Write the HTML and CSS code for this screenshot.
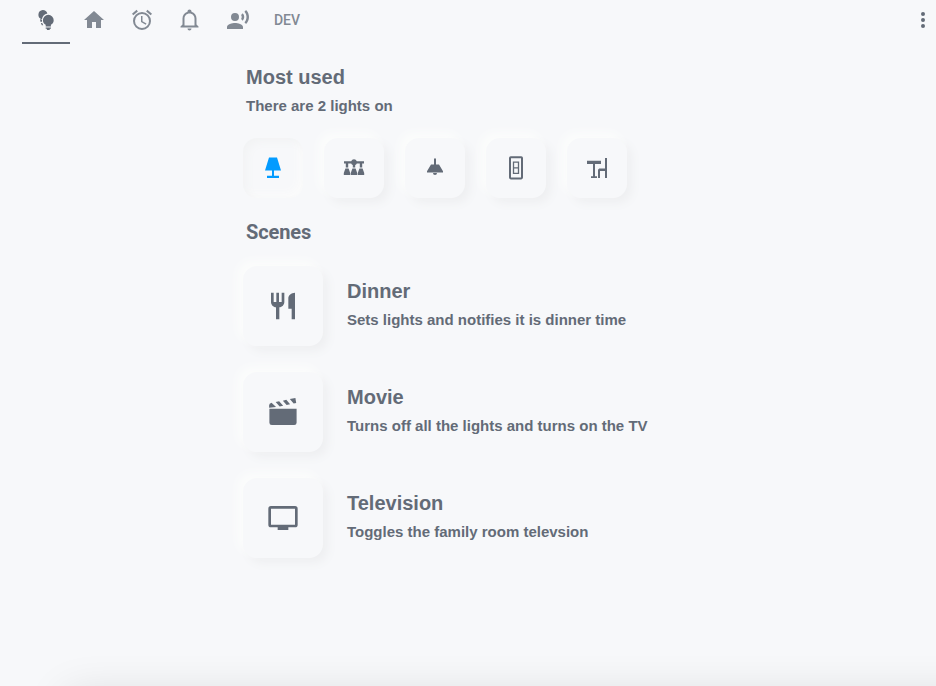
FILE: index.html
```html
<!DOCTYPE html>
<html lang="en">
<head>
<meta charset="utf-8">
<title>Home</title>
<link rel="stylesheet" href="styles.css">
</head>
<body>
<header class="toolbar">
  <nav class="tabs">
    <a class="tab active"><svg viewBox="0 0 24 24"><path d="M8.8 2A4.9 4.9 0 0 1 13.4 5.5A7 7 0 0 0 7.9 11.4A4.8 4.8 0 0 1 8.8 2ZM6.1 11L8 12V13.8H6.4ZM6.9 15H8.2L9.2 17.2H7.8Z"/><path d="M14.3 6.8A5.4 5.4 0 0 1 19.7 12.2C19.7 14.2 18.6 15.7 16.9 16.8V18.6H11.7V16.8C10 15.7 8.9 14.2 8.9 12.2A5.4 5.4 0 0 1 14.3 6.8ZM11.7 19.6H16.9V20.8H11.7ZM12.9 20.8H15.7V22H12.9Z"/></svg></a>
    <a class="tab"><svg viewBox="0 0 24 24"><path d="M10,20V14H14V20H19V12H22L12,3L2,12H5V20H10Z"/></svg></a>
    <a class="tab"><svg viewBox="0 0 24 24"><path d="M12,20A7,7 0 0,1 5,13A7,7 0 0,1 12,6A7,7 0 0,1 19,13A7,7 0 0,1 12,20M12,4A9,9 0 0,0 3,13A9,9 0 0,0 12,22A9,9 0 0,0 21,13A9,9 0 0,0 12,4M12.5,8H11V14L15.75,16.85L16.5,15.62L12.5,13.25V8M7.88,3.39L6.6,1.86L2,5.71L3.29,7.24L7.88,3.39M22,5.72L17.4,1.86L16.11,3.39L20.71,7.25L22,5.72Z"/></svg></a>
    <a class="tab"><svg viewBox="0.5 0.5 24 24"><path d="M10 21H14C14 22.1 13.1 23 12 23S10 22.1 10 21M21 19V20H3V19L5 17V11C5 7.9 7.03 5.17 10 4.29V4C10 2.9 10.9 2 12 2S14 2.9 14 4V4.29C16.97 5.17 19 7.9 19 11V17L21 19M17 11C17 8.24 14.76 6 12 6S7 8.24 7 11V18H17V11Z"/></svg></a>
    <a class="tab"><svg viewBox="0 0 24 24"><path d="M9,5A4,4 0 0,1 13,9A4,4 0 0,1 9,13A4,4 0 0,1 5,9A4,4 0 0,1 9,5M9,15C11.67,15 17,16.34 17,19V21H1V19C1,16.34 6.33,15 9,15M16.76,5.36C18.78,7.56 18.78,10.61 16.76,12.63L15.08,10.94C15.92,9.76 15.92,8.23 15.08,7.05L16.76,5.36M20.07,2C24,6.05 23.97,12.11 20.07,16L18.44,14.37C21.21,11.19 21.21,6.65 18.44,3.63L20.07,2Z"/></svg></a>
    <a class="tab dev">DEV</a>
  </nav>
  <svg class="menu" viewBox="0 0 24 24"><path d="M12,16A2,2 0 1,1 12,20A2,2 0 1,1 12,16M12,10A2,2 0 1,1 12,14A2,2 0 1,1 12,10M12,4A2,2 0 1,1 12,8A2,2 0 1,1 12,4Z"/></svg>
</header>
<main class="content">
  <h1>Most used</h1>
  <p>There are 2 lights on</p>
  <div class="lights">
    <div class="tile on"><svg viewBox="0 0.5 24 24"><path d="M8,2H16L20,15H4L8,2M11,15H13V20.3H18V22.5H6V20.3H11V15Z"/></svg></div>
    <div class="tile"><svg viewBox="0 0 24 24"><path d="M2 5.2H9.2A3 3 0 0 1 14.8 5.2H22V7.4H20.2V11.5H17.8V7.4H14.8A3 3 0 0 1 13.2 9V11.5H10.8V9A3 3 0 0 1 9.2 7.4H6.2V11.5H3.8V7.4H2ZM3.4 12.5H6.6L8.2 17V19H1.8V17ZM10.4 12.5H13.6L15.2 17V19H8.8V17ZM17.4 12.5H20.6L22.2 17V19H15.8V17Z"/></svg></div>
    <div class="tile"><svg viewBox="0 0 24 24"><path d="M8,8.5H11V2.5H13V8.5H16L20,15.2V16.4H4V15.2L8,8.5M14,17A2,2 0 0,1 10,17H14Z"/></svg></div>
    <div class="tile"><svg class="line" viewBox="0 0 24 24"><rect x="6" y="1.2" width="12" height="21.2" rx=".8"/><path class="thin" d="M9.5 6.2H14.5V17.4H9.5ZM9.5 11.8H14.5"/></svg></div>
    <div class="tile"><svg viewBox="0 0 24 24"><path d="M2 4.8H16V8H10V20.2H12V22H6V20.2H8V8H2ZM20 2H22V22H20V15H15V22H13V13.8L14.2 12.5H20Z"/></svg></div>
  </div>
  <h2>Scenes</h2>
  <section class="scene">
    <div class="tile big"><svg viewBox="0 0 24 24"><path d="M11,9H9V2H7V9H5V2H3V9C3,11.12 4.66,12.84 6.75,12.97V22H9.25V12.97C11.34,12.84 13,11.12 13,9V2H11V9M16,6V14H18.5V22H21V2C18.24,2 16,4.24 16,6Z"/></svg></div>
    <div><h3>Dinner</h3><p>Sets lights and notifies it is dinner time</p></div>
  </section>
  <section class="scene">
    <div class="tile big"><svg viewBox="0 0 24 24"><path d="M1.8 9.5H22.2V20A1.8 1.8 0 0 1 20.4 21.8H3.6A1.8 1.8 0 0 1 1.8 20ZM1.6 8.8V7Q1.6 5.6 3.4 5L6.8 8.3ZM6.5 4.5L9.1 3.9L12.1 7.3L9.5 7.9ZM11.9 3.5L14.5 2.9L17.3 6.2L14.7 6.8ZM17.1 2.3L21.3 1.5L21.9 5.3L20 5.6Z"/></svg></div>
    <div><h3>Movie</h3><p>Turns off all the lights and turns on the TV</p></div>
  </section>
  <section class="scene">
    <div class="tile big"><svg viewBox="0 0 24 24"><path d="M21,17H3V5H21M21,3H3A2,2 0 0,0 1,5V17A2,2 0 0,0 3,19H8V21H16V19H21A2,2 0 0,0 23,17V5A2,2 0 0,0 21,3Z"/></svg></div>
    <div><h3>Television</h3><p>Toggles the family room televsion</p></div>
  </section>
</main>
<div class="edge"></div>
</body>
</html>
```
FILE: styles.css
```css
* { box-sizing: border-box; }
body {
  margin: 0;
  height: 686px;
  overflow: hidden;
  background: #f7f8fa;
  color: #636b77;
  font-family: "Liberation Sans", Arial, sans-serif;
}
svg { display: block; width: 24px; height: 24px; fill: currentColor; flex: none; }
.toolbar { display: flex; justify-content: space-between; height: 44px; padding-left: 22px; overflow: hidden; }
.tabs { display: flex; }
.tab { display: flex; justify-content: center; width: 48px; padding-top: 8px; color: #828993; }
.tab.active { color: #636b77; border-bottom: 2px solid #636b77; }
.dev { width: 50px; font: 500 14px/24px Roboto, sans-serif; }
.menu { margin: 8px 1px 0 0; }
.content { padding-left: 246px; }
h1, h2, h3, p { margin: 0; font-weight: bold; }
h1, h2, h3 { font-size: 20px; line-height: 24px; }
h1 { padding-top: 21px; }
h2 { font-family: Roboto, sans-serif; font-weight: 700; letter-spacing: -.1px; margin-top: 22px; }
p { font-size: 15px; line-height: 20px; margin-top: 7px; }
.lights { display: flex; gap: 21px; margin: 22px 0 0 -3px; }
.tile {
  display: flex;
  align-items: center;
  justify-content: center;
  flex: none;
  width: 60px;
  height: 60px;
  border-radius: 14px;
  background: #f7f8fa;
  box-shadow: -5px -5px 10px #fcfdfc, 5px 5px 10px #eeeff1;
}
.tile.on { color: #039bff; box-shadow: inset 4px 4px 8px #f2f3f4, inset -4px -4px 8px #fbfbfb; }
.tile.big { width: 80px; height: 80px; }
.big svg { width: 32px; height: 32px; }
.line { fill: none; stroke: currentColor; stroke-width: 2; }
.thin { stroke-width: 1.3; }
.scene { display: flex; gap: 24px; margin: 22px 0 26px -3px; }
.scene + .scene { margin-top: 0; }
.scene h3 { margin-top: 13px; }
.edge { position: fixed; top: 694px; left: 66px; right: -60px; height: 80px; box-shadow: 0 0 44px rgba(0, 0, 0, .12); }
```
